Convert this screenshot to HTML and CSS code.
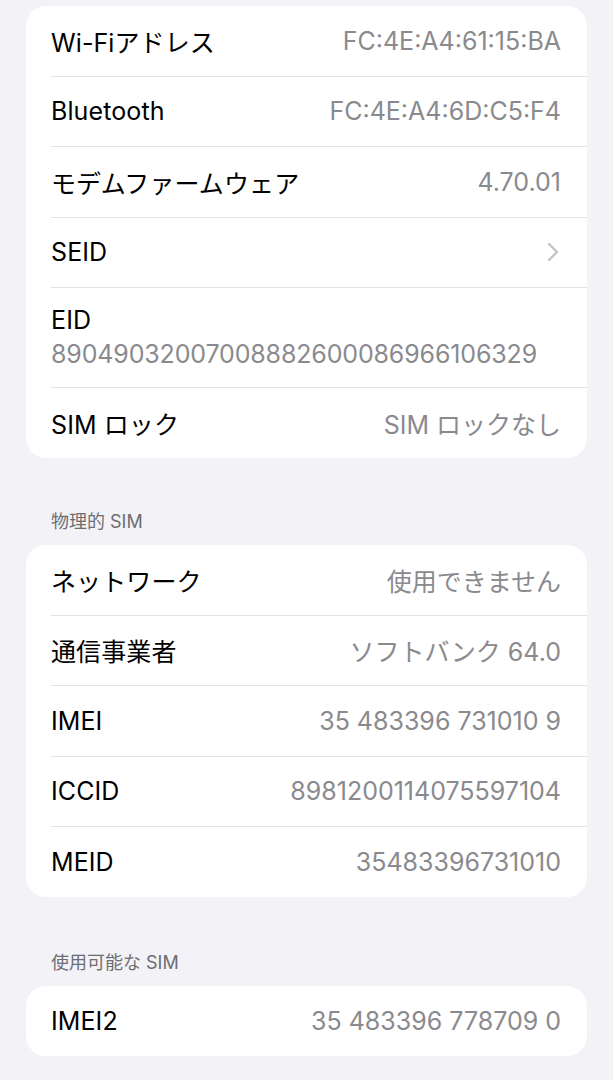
FILE: index.html
```html
<!DOCTYPE html>
<html lang="ja">
<head>
<meta charset="utf-8">
<link rel="stylesheet" href="styles.css">
</head>
<body>
<div class="page">
  <div class="card first">
    <div class="row"><span class="label">Wi-Fiアドレス</span><span class="value">FC:4E:A4:61:15:BA</span></div>
    <div class="row"><span class="label">Bluetooth</span><span class="value">FC:4E:A4:6D:C5:F4</span></div>
    <div class="row"><span class="label">モデムファームウェア</span><span class="value">4.70.01</span></div>
    <div class="row"><span class="label">SEID</span><svg class="chev" width="12" height="20" viewBox="0 0 12 20"><path d="M2 2 L10 10 L2 18" fill="none" stroke="#c4c4c7" stroke-width="2.4" stroke-linecap="round" stroke-linejoin="round"/></svg></div>
    <div class="row stack"><span class="label">EID</span><span class="value eid">89049032007008882600086966106329</span></div>
    <div class="row"><span class="label">SIM ロック</span><span class="value">SIM ロックなし</span></div>
  </div>
  <div class="header">物理的 SIM</div>
  <div class="card">
    <div class="row"><span class="label">ネットワーク</span><span class="value">使用できません</span></div>
    <div class="row"><span class="label">通信事業者</span><span class="value">ソフトバンク 64.0</span></div>
    <div class="row"><span class="label">IMEI</span><span class="value">35 483396 731010 9</span></div>
    <div class="row"><span class="label">ICCID</span><span class="value">8981200114075597104</span></div>
    <div class="row"><span class="label">MEID</span><span class="value">35483396731010</span></div>
  </div>
  <div class="header second">使用可能な SIM</div>
  <div class="card">
    <div class="row"><span class="label">IMEI2</span><span class="value">35 483396 778709 0</span></div>
  </div>
</div>
</body>
</html>
```

FILE: styles.css
```css
html, body {
  margin: 0;
  padding: 0;
  background: #f2f2f7;
}
body {
  font-family: "Inter", "Noto Sans CJK JP", sans-serif;
  -webkit-font-smoothing: antialiased;
}
.page {
  padding: 6px 26px 0 26px;
  display: flex;
  flex-direction: column;
}
.card {
  background: #ffffff;
  border-radius: 20px;
  overflow: hidden;
}
.row {
  margin-left: 25px;
  padding-right: 26px;
  height: 69.5px;
  display: flex;
  align-items: center;
  justify-content: space-between;
  border-bottom: 1px solid #e2e2e6;
  box-sizing: content-box;
}
.row:last-child {
  border-bottom: none;
  height: 70px;
}
.label {
  font-size: 25px;
  color: #000000;
  letter-spacing: 0.1px;
}
.value {
  font-size: 25px;
  color: #8a8a8e;
  letter-spacing: 0;
}
.value.eid {
  letter-spacing: -0.15px;
}
.row.stack {
  height: auto;
  flex-direction: column;
  align-items: flex-start;
  justify-content: flex-start;
  padding-top: 15px;
  padding-bottom: 16px;
}
.row.stack .label,
.row.stack .value {
  line-height: 34px;
}
.chev {
  display: block;
  margin-right: 2px;
}
.header {
  font-size: 18px;
  line-height: 24px;
  color: #6d6d72;
  padding-left: 25px;
  margin-top: 52px;
  margin-bottom: 11px;
}
.header.second {
  margin-top: 54px;
}
```
